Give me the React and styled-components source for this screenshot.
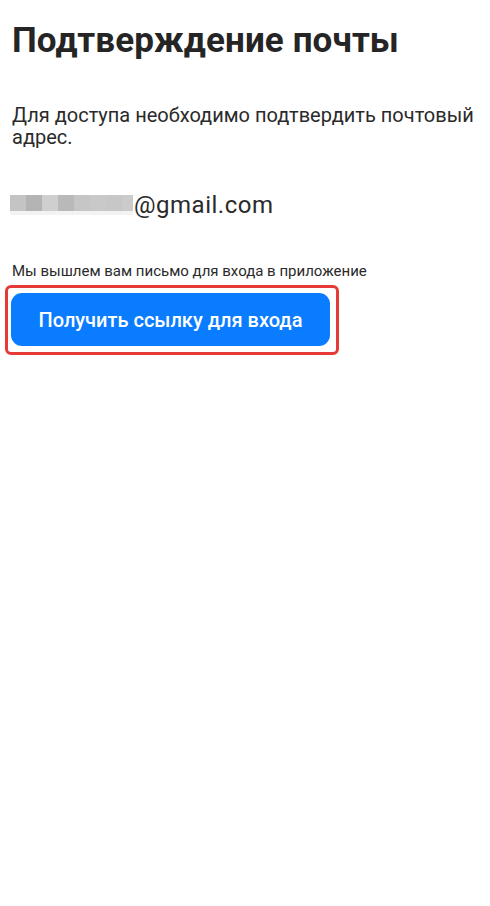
import React from 'react';
import styled, { createGlobalStyle } from 'styled-components';

const Global = createGlobalStyle`
  html, body {
    margin: 0;
    padding: 0;
    background: #fff;
  }
  body {
    font-family: Roboto, "Noto Sans", sans-serif;
    color: #222;
  }
`;

const Page = styled.div`
  width: 490px;
  min-height: 906px;
  padding: 0 4px 0 12px;
  box-sizing: border-box;
  display: flex;
  flex-direction: column;
`;

const Title = styled.h1`
  margin: 21px 0 0;
  font-size: 35px;
  line-height: 40px;
  font-weight: 700;
  letter-spacing: 0.1px;
  color: #252525;
`;

const Lead = styled.p`
  margin: 43px 0 0;
  font-size: 20px;
  line-height: 22px;
  color: #2a2a2a;
`;

const Email = styled.div`
  margin-top: 43px;
  display: flex;
  align-items: center;
  font-size: 24px;
  line-height: 28px;
  letter-spacing: 0.5px;
  color: #2a2a2a;
`;

const Blur = styled.span`
  display: flex;
  flex-direction: column;
  margin-left: -2px;
  margin-right: 1px;
`;

const BlurRow = styled.span`
  display: flex;
`;

const Pix = styled.span`
  display: block;
  width: ${p => p.w}px;
  height: ${p => p.h || 16}px;
  background: ${p => p.c};
`;

const Note = styled.p`
  margin: 43px 0 0;
  font-size: 15px;
  line-height: 18px;
  color: #2a2a2a;
`;

const Highlight = styled.div`
  align-self: flex-start;
  margin: 5px 0 0 -7px;
  padding: 5px 6px 6px 3px;
  border: 3px solid #e53a35;
  border-radius: 6px;
`;

const Button = styled.button`
  display: block;
  width: 319px;
  height: 53px;
  border: 0;
  border-radius: 11px;
  background: #0a7cff;
  color: #fff;
  font-family: Roboto, "Noto Sans", sans-serif;
  font-size: 20px;
  font-weight: 500;
  cursor: pointer;
`;

const blocks = [
  ['#c4c4c4', 16], ['#b4b4b4', 16], ['#cfcfcf', 16], ['#b9b9b9', 16],
  ['#c6c6c6', 16], ['#c9c9c9', 16], ['#c7c7c7', 16], ['#cbcbcb', 11],
];

export default function App() {
  return (
    <Page>
      <Global />
      <Title>Подтверждение почты</Title>
      <Lead>Для доступа необходимо подтвердить почтовый адрес.</Lead>
      <Email>
        <Blur>
          <BlurRow>
            {blocks.map(([c, w], i) => <Pix key={i} c={c} w={w} />)}
          </BlurRow>
          <BlurRow>
            <Pix c="#f3f3f3" w={123} h={4} />
          </BlurRow>
        </Blur>
        @gmail.com
      </Email>
      <Note>Мы вышлем вам письмо для входа в приложение</Note>
      <Highlight>
        <Button>Получить ссылку для входа</Button>
      </Highlight>
    </Page>
  );
}
